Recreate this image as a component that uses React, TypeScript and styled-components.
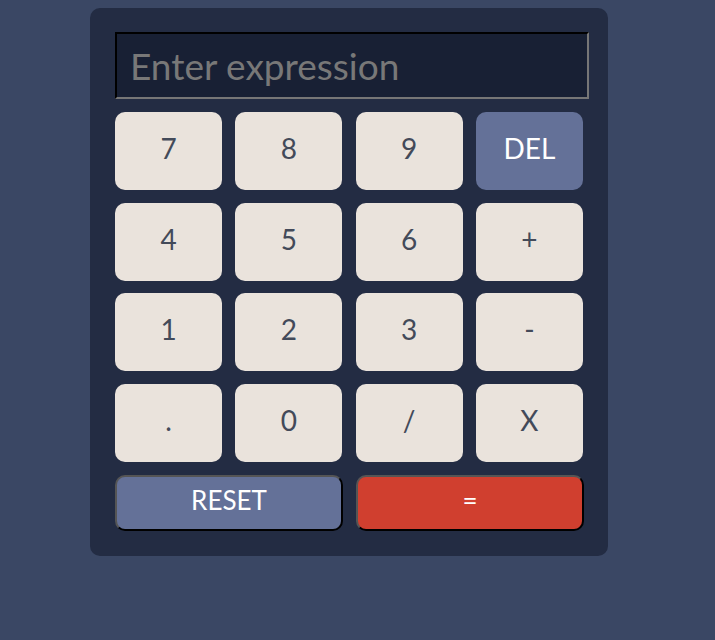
import styled, { createGlobalStyle } from 'styled-components';

const GlobalStyle = createGlobalStyle`
  body {
    margin: 0;
    background: #3a4764;
    font-family: 'Lato', 'Open Sans', sans-serif;
  }
`;

const Page = styled.div`
  min-height: 640px;
  padding: 8px 0 0 90px;
  box-sizing: border-box;
`;

const Calculator = styled.div`
  width: 518px;
  height: 548px;
  box-sizing: border-box;
  background: #232c43;
  border-radius: 10px;
  padding: 24px 25px;
`;

const Display = styled.input`
  display: block;
  width: 474px;
  height: 67px;
  box-sizing: border-box;
  margin: 0 0 13px;
  padding: 0 0 0 13px;
  background: #182034;
  border: 2px inset #767676;
  border-top-color: #1a1a1a;
  border-left-color: #1a1a1a;
  color: #eae3dc;
  font-family: 'Lato', sans-serif;
  font-size: 37px;
  outline: none;

  &::placeholder {
    color: #787878;
  }
`;

const Keypad = styled.div`
  display: grid;
  grid-template-columns: repeat(4, 107px);
  grid-auto-rows: 78px;
  column-gap: 13.3px;
  row-gap: 12.5px;
`;

const Key = styled.button<{ $variant?: 'del' }>`
  border: none;
  border-radius: 10px;
  background: ${(p) => (p.$variant === 'del' ? '#647198' : '#eae3dc')};
  color: ${(p) => (p.$variant === 'del' ? '#ffffff' : '#434a59')};
  font-family: 'Lato', sans-serif;
  font-size: 28px;
  padding: 0 0 6px;
  cursor: pointer;
`;

const BottomRow = styled.div`
  display: grid;
  grid-template-columns: 228px 228px;
  column-gap: 13px;
  margin-top: 13px;
`;

const WideKey = styled.button<{ $color: string }>`
  height: 56px;
  border: 2px outset #555;
  border-right-color: #000;
  border-bottom-color: #000;
  border-radius: 10px;
  background: ${(p) => p.$color};
  color: #ffffff;
  font-family: 'Lato', sans-serif;
  font-size: 26px;
  padding: 0 0 6px;
  cursor: pointer;
`;

const keys = ['7', '8', '9', 'DEL', '4', '5', '6', '+', '1', '2', '3', '-', '.', '0', '/', 'X'];

export default function App() {
  return (
    <>
      <GlobalStyle />
      <Page>
        <Calculator>
          <Display placeholder="Enter expression" />
          <Keypad>
            {keys.map((k) => (
              <Key key={k} $variant={k === 'DEL' ? 'del' : undefined}>
                {k}
              </Key>
            ))}
          </Keypad>
          <BottomRow>
            <WideKey $color="#647198">RESET</WideKey>
            <WideKey $color="#d03f2f">=</WideKey>
          </BottomRow>
        </Calculator>
      </Page>
    </>
  );
}
